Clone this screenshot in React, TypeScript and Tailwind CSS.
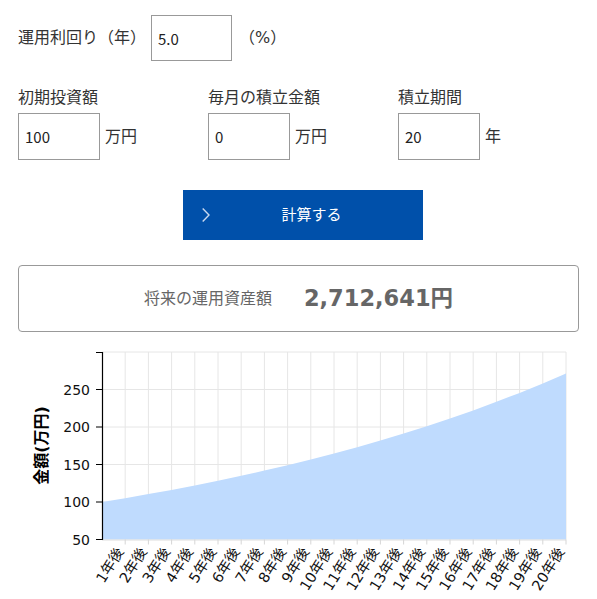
import { useState } from 'react'

const FONT = "font-['DejaVu_Sans','Noto_Sans_CJK_JP',sans-serif]"
const INPUT =
  "border border-[#999] px-[6px] text-[15px] text-[#222] outline-none font-['Noto_Sans_CJK_JP',sans-serif]"

// plot area inside the chart svg
const X0 = 102
const X1 = 566
const Y0 = 12
const Y1 = 199.5
const V_MIN = 50
const V_MAX = 300

const yOf = (v: number) => Y1 - ((v - V_MIN) / (V_MAX - V_MIN)) * (Y1 - Y0)
const xOf = (i: number) => X0 + (i * (X1 - X0)) / 20

function projection(initial: number, monthly: number, rate: number, years: number) {
  const r = rate / 100 / 12
  const out: number[] = []
  let v = initial
  out.push(v)
  for (let y = 1; y <= years; y++) {
    for (let m = 0; m < 12; m++) v = v * (1 + r) + monthly
    out.push(v)
  }
  return out
}

function Field({ label, value, unit, onChange }: { label: string; value: string; unit: string; onChange: (v: string) => void }) {
  return (
    <div className="w-[190px] shrink-0">
      <div className="text-[16px] leading-[22px] text-[#333]">{label}</div>
      <div className="mt-[4px] flex items-center">
        <input value={value} onChange={(e) => onChange(e.target.value)} className={`w-[82px] h-[47px] ${INPUT}`} />
        <span className="ml-[5px] text-[16px] text-[#333]">{unit}</span>
      </div>
    </div>
  )
}

function Chart({ values }: { values: number[] }) {
  const ticks = [250, 200, 150, 100, 50]
  const area =
    `M${X0},${Y1} ` +
    values.map((v, i) => `L${xOf(i).toFixed(1)},${yOf(v).toFixed(1)}`).join(' ') +
    ` L${X1},${Y1} Z`

  return (
    <svg width="597" height="259" className="block">
      {/* grid */}
      {[300, 250, 200, 150, 100].map((v) => (
        <line key={v} x1={X0} x2={X1} y1={yOf(v)} y2={yOf(v)} stroke="#e6e6e6" strokeWidth="1" />
      ))}
      {Array.from({ length: 20 }, (_, i) => (
        <line key={i} x1={xOf(i + 1)} x2={xOf(i + 1)} y1={Y0} y2={Y1} stroke="#e6e6e6" strokeWidth="1" />
      ))}

      <path d={area} fill="#bfdbfe" />

      {/* x axis */}
      <line x1={X0} x2={X1} y1={Y1 + 0.5} y2={Y1 + 0.5} stroke="#dddddd" strokeWidth="1" />
      {Array.from({ length: 20 }, (_, i) => (
        <g key={i}>
          <line x1={xOf(i + 1)} x2={xOf(i + 1)} y1={Y1} y2={Y1 + 5} stroke="#d6d6d6" strokeWidth="1" />
          <text
            transform={`translate(${xOf(i + 1) - 1},${Y1 + 12}) rotate(-58)`}
            textAnchor="end"
            fontSize="14.5"
            fill="#111"
          >
            {i + 1}年後
          </text>
        </g>
      ))}

      {/* y axis */}
      <path d={`M${X0 - 6},${Y0 + 0.5}H${X0 + 0.5}V${Y1}H${X0 - 6}`} fill="none" stroke="#000" strokeWidth="1.2" />
      {ticks.map((v) => (
        <g key={v}>
          <line x1={X0 - 6} x2={X0} y1={yOf(v)} y2={yOf(v)} stroke="#000" strokeWidth="1" />
          <text x={X0 - 12} y={yOf(v)} dy="0.36em" textAnchor="end" fontSize="14" fill="#111">
            {v}
          </text>
        </g>
      ))}
      <text transform="translate(47,105.5) rotate(-90)" textAnchor="middle" fontSize="16" fontWeight="bold" fill="#000">
        金額(万円)
      </text>
    </svg>
  )
}

export default function App() {
  const [rate, setRate] = useState('5.0')
  const [initial, setInitial] = useState('100')
  const [monthly, setMonthly] = useState('0')
  const [years, setYears] = useState('20')
  const [values, setValues] = useState(() => projection(100, 0, 5, 20))

  const total = Math.ceil(values[values.length - 1] * 10000)

  const calc = () => {
    setValues(projection(Number(initial) || 0, Number(monthly) || 0, Number(rate) || 0, Number(years) || 0))
  }

  return (
    <div className={`${FONT} w-[597px] h-[599px] bg-white overflow-hidden`}>
      <div className="px-[18px] pt-[15px]">
        <div className="flex items-center">
          <span className="text-[16px] text-[#333] w-[133px] shrink-0 whitespace-nowrap">運用利回り（年）</span>
          <input value={rate} onChange={(e) => setRate(e.target.value)} className={`w-[81px] h-[46px] ${INPUT}`} />
          <span className="ml-[7px] text-[16px] text-[#333]">（%）</span>
        </div>

        <div className="mt-[26px] flex">
          <Field label="初期投資額" value={initial} unit="万円" onChange={setInitial} />
          <Field label="毎月の積立金額" value={monthly} unit="万円" onChange={setMonthly} />
          <Field label="積立期間" value={years} unit="年" onChange={setYears} />
        </div>

        <button
          onClick={calc}
          className="mt-[30px] ml-[165px] w-[240px] h-[50px] bg-[#0050aa] text-white text-[15px] flex items-center pl-[19px] pr-[10px]"
        >
          <svg width="8" height="14" viewBox="0 0 8 14">
            <polyline points="0.7,0.5 7,7 0.7,13.5" fill="none" stroke="#c9d9ef" strokeWidth="1.4" />
          </svg>
          <span className="flex-1 text-center">計算する</span>
        </button>

        <div className="mt-[25px] h-[67px] border border-[#999] rounded-[4px] flex items-center justify-center gap-[32px] text-[#666]">
          <span className="text-[16px]">将来の運用資産額</span>
          <span className="text-[22.5px] font-bold">{total.toLocaleString('ja-JP')}円</span>
        </div>
      </div>

      <div className="mt-[8px]">
        <Chart values={values} />
      </div>
    </div>
  )
}
